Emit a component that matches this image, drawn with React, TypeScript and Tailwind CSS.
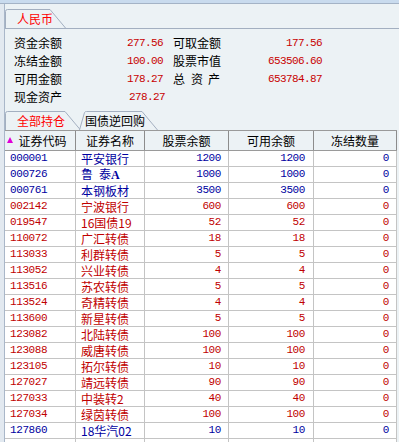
import React from "react";

const CJK = { fontFamily: '"Noto Sans CJK SC", "Liberation Sans", sans-serif' };
const MONO = { fontFamily: '"Liberation Mono", "Noto Sans CJK SC", monospace' };

type Row = { code: string; name: React.ReactNode; a: string; b: string; c: string; blue?: boolean };

const rows: Row[] = [
  { code: "000001", name: "平安银行", a: "1200", b: "1200", c: "0", blue: true },
  {
    code: "000726",
    name: (
      <span className="flex items-baseline">
        <span className="mr-[6px]">鲁</span>
        <span>泰</span>
        <span className="font-bold" style={{ fontFamily: '"Liberation Serif", serif' }}>A</span>
      </span>
    ),
    a: "1000",
    b: "1000",
    c: "0",
    blue: true,
  },
  { code: "000761", name: "本钢板材", a: "3500", b: "3500", c: "0", blue: true },
  { code: "002142", name: "宁波银行", a: "600", b: "600", c: "0" },
  { code: "019547", name: "16国债19", a: "52", b: "52", c: "0" },
  { code: "110072", name: "广汇转债", a: "18", b: "18", c: "0" },
  { code: "113033", name: "利群转债", a: "5", b: "5", c: "0" },
  { code: "113052", name: "兴业转债", a: "4", b: "4", c: "0" },
  { code: "113516", name: "苏农转债", a: "5", b: "5", c: "0" },
  { code: "113524", name: "奇精转债", a: "4", b: "4", c: "0" },
  { code: "113600", name: "新星转债", a: "5", b: "5", c: "0" },
  { code: "123082", name: "北陆转债", a: "100", b: "100", c: "0" },
  { code: "123088", name: "威唐转债", a: "100", b: "100", c: "0" },
  { code: "123105", name: "拓尔转债", a: "10", b: "10", c: "0" },
  { code: "127027", name: "靖远转债", a: "90", b: "90", c: "0" },
  { code: "127033", name: "中装转2", a: "40", b: "40", c: "0" },
  { code: "127034", name: "绿茵转债", a: "100", b: "100", c: "0" },
  { code: "127860", name: "18华汽02", a: "10", b: "10", c: "0", blue: true },
];

function Tab({
  label,
  width,
  active,
  color,
  leftSlant,
}: {
  label: string;
  width: number;
  active?: boolean;
  color: string;
  leftSlant?: boolean;
}) {
  const h = 19;
  const slant = 16;
  const d = leftSlant
    ? `M0.5 ${h} L5.5 1.5 Q6 0.5 7.5 0.5 L${width - slant} 0.5 L${width - 0.5} ${h}`
    : `M0.5 ${h} L0.5 2.5 Q0.5 0.5 2.5 0.5 L${width - slant} 0.5 L${width - 0.5} ${h}`;
  return (
    <div className="relative h-[19px] flex items-center" style={{ width }}>
      <svg className="absolute inset-0" width={width} height={h} viewBox={`0 0 ${width} ${h}`}>
        <path d={d} fill={active ? "#ecf2f5" : "#ecf2f5"} stroke="#a3afc0" strokeWidth="1" />
      </svg>
      <span
        className={`relative text-[12px] leading-none ${leftSlant ? "pl-[6px]" : "pl-[12px]"}`}
        style={{ ...CJK, color }}
      >
        {label}
      </span>
    </div>
  );
}

function SumRow({
  l1,
  v1,
  l2,
  v2,
  shift,
}: {
  l1: React.ReactNode;
  v1: string;
  l2?: React.ReactNode;
  v2?: string;
  shift?: boolean;
}) {
  return (
    <div className="grid grid-cols-[60px_89px_10px_60px_89px] h-[18px] items-center pl-[9px]">
      <span className="text-[12px] leading-none text-black" style={CJK}>
        {l1}
      </span>
      <span
        className={`text-right text-[11px] leading-none tracking-[-0.6px] text-[#c80000] ${shift ? "-mr-[2px]" : ""}`}
        style={MONO}
      >
        {v1}
      </span>
      <span />
      <span className="text-[12px] leading-none text-black" style={CJK}>
        {l2}
      </span>
      <span className="text-right text-[11px] leading-none tracking-[-0.6px] text-[#c80000]" style={MONO}>
        {v2}
      </span>
    </div>
  );
}

export default function App() {
  const cols = "grid grid-cols-[71px_69px_84px_85px_83px]";
  return (
    <div className="w-[399px] h-[442px] overflow-hidden bg-[#ecf2f5] flex flex-col">
      <div className="h-[4px] shrink-0 bg-[#c9dbee] border-b border-[#a4b3c6]" />
      <div className="flex flex-1 min-h-0">
        <div className="w-[5px] shrink-0 bg-[#e2e9f0] border-r border-[#a9b7c9]" />
        <div className="flex-1 flex flex-col min-w-0">
          {/* currency tab */}
          <div className="pt-[5px] flex border-b border-[#a3afc0]">
            <Tab label="人民币" width={61} active color="#ff0000" />
          </div>
          {/* summary */}
          <div className="pt-[5px] flex flex-col">
            <SumRow l1="资金余额" v1="277.56" l2="可取金额" v2="177.56" />
            <SumRow l1="冻结金额" v1="100.00" l2="股票市值" v2="653506.60" />
            <SumRow
              l1="可用金额"
              v1="178.27"
              l2={
                <span className="flex">
                  <span className="mr-[6px]">总</span>
                  <span className="mr-[5px]">资</span>
                  <span>产</span>
                </span>
              }
              v2="653784.87"
            />
            <SumRow l1="现金资产" v1="278.27" shift />
          </div>
          {/* tabs */}
          <div className="pt-[5px] flex">
            <Tab label="全部持仓" width={76} active color="#ff0000" />
            <div className="-ml-[2px]">
              <Tab label="国债逆回购" width={79} color="#000000" leftSlant />
            </div>
          </div>
          {/* table */}
          <div className="w-[392px] bg-white">
            <div className={`${cols} h-[21px] bg-[#ecf2f5] border-y border-[#9a9a9a]`}>
              {["证券代码", "证券名称", "股票余额", "可用余额", "冻结数量"].map((h, i) => (
                <div
                  key={h}
                  className="relative flex items-center justify-center border-r border-[#8c8c8c] text-[12px] leading-none text-black"
                  style={CJK}
                >
                  {i === 0 && (
                    <svg className="absolute left-[2px] top-[6px]" width="6" height="6" viewBox="0 0 6 6">
                      <path d="M3 0 L6 6 L0 6 Z" fill="#e000d8" />
                    </svg>
                  )}
                  <span className={i === 0 ? "pl-[5px]" : ""}>{h}</span>
                </div>
              ))}
            </div>
            {[...rows, null].map((r, idx) => {
              const color = r && r.blue ? "text-[#0000a0]" : "text-[#c00000]";
              return (
                <div key={idx} className={`${cols} h-[16px] ${color}`}>
                  <div className="flex items-center pl-[5px] border-r border-b border-[#c4c4c4] text-[11px] leading-none tracking-[-0.4px]" style={MONO}>
                    {r?.code}
                  </div>
                  <div className="flex items-center pl-[5px] border-r border-b border-[#c4c4c4] text-[12px] leading-none" style={CJK}>
                    {r?.name}
                  </div>
                  <div className="flex items-center justify-end pr-[7px] border-r border-b border-[#c4c4c4] text-[11px] leading-none tracking-[-0.4px]" style={MONO}>
                    {r?.a}
                  </div>
                  <div className="flex items-center justify-end pr-[8px] border-r border-b border-[#c4c4c4] text-[11px] leading-none tracking-[-0.4px]" style={MONO}>
                    {r?.b}
                  </div>
                  <div className="flex items-center justify-end pr-[7px] border-r border-b border-[#c4c4c4] text-[11px] leading-none tracking-[-0.4px]" style={MONO}>
                    {r?.c}
                  </div>
                </div>
              );
            })}
          </div>
        </div>
      </div>
    </div>
  );
}
